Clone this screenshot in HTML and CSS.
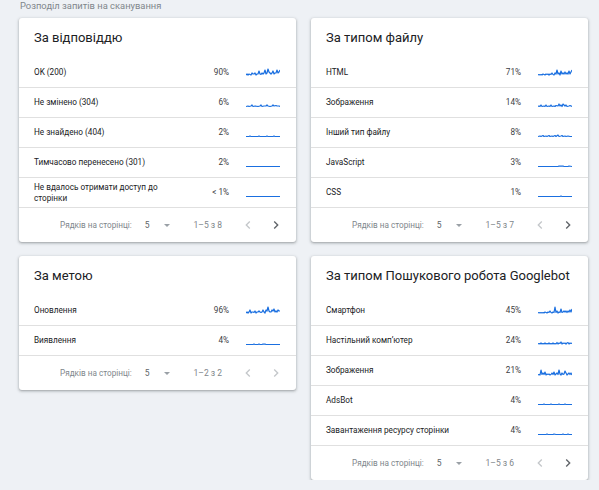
FILE: index.html
```html
<!DOCTYPE html>
<html lang="uk">
<head>
    <meta charset="UTF-8">
    <meta name="viewport" content="width=device-width, initial-scale=1.0">
    <title>Статистика сканування</title>
    <link rel="stylesheet" href="styles.css">
</head>
<body>
    <div class="page">
        <div class="caption">Розподіл запитів на сканування</div>

        <div class="grid">
            <!-- за відповіддю -->
            <section class="card">
                <h2 class="card-title">За відповіддю</h2>
                <div class="row">
                    <span class="label">OK (200)</span>
                    <span class="pct">90%</span>
                    <svg class="spark" viewBox="0 0 34 12"><polyline points="0,8 1,7 2,8 3,7 4,7.5 5,8 6,6 7,7 8,7 9,6 10,8 11,7 12,7 13,4 14,7 15,7.5 16,6 17,7 18,6 19,3 20,7 21,6 22,2 23,5 24,6 25,7 26,6 27,4 28,7 29,6 30,6 31,3 32,6 33,5 34,3"/></svg>
                </div>
                <div class="row">
                    <span class="label">Не змінено (304)</span>
                    <span class="pct">6%</span>
                    <svg class="spark" viewBox="0 0 34 12"><polyline points="0,9.5 2,9 3,9.5 5,9 6,8 7,9.5 9,9 10,9.2 12,9.5 14,9 15,8 16,9.5 18,9 20,9 21,8 22,9 24,9.5 26,9 27,8 28,9 30,8.5 31,9 33,9 34,9.5"/></svg>
                </div>
                <div class="row">
                    <span class="label">Не знайдено (404)</span>
                    <span class="pct">2%</span>
                    <svg class="spark" viewBox="0 0 34 12"><polyline points="0,9.5 3,9.5 4,9 5,9.5 12,9.5 13,9 14,9.5 20,9.5 21,9 22,9.5 27,9.5 28,9 29,9.5 34,9.5"/></svg>
                </div>
                <div class="row">
                    <span class="label">Тимчасово перенесено (301)</span>
                    <span class="pct">2%</span>
                    <svg class="spark" viewBox="0 0 34 12"><polyline points="0,9.5 34,9.5"/></svg>
                </div>
                <div class="row">
                    <span class="label">Не вдалось отримати доступ до сторінки</span>
                    <span class="pct">&lt; 1%</span>
                    <svg class="spark" viewBox="0 0 34 12"><polyline points="0,9.5 34,9.5"/></svg>
                </div>
                <div class="pager">
                    <span class="pager-label">Рядків на сторінці:</span>
                    <span class="pager-size">5</span>
                    <span class="pager-caret"></span>
                    <span class="pager-range">1–5 з 8</span>
                    <svg class="chev off" viewBox="0 0 24 24"><path d="M15.41 7.41L14 6l-6 6 6 6 1.41-1.41L10.83 12z"/></svg>
                    <svg class="chev" viewBox="0 0 24 24"><path d="M10 6L8.59 7.41 13.17 12l-4.58 4.59L10 18l6-6z"/></svg>
                </div>
            </section>

            <!-- за типом файлу -->
            <section class="card">
                <h2 class="card-title">За типом файлу</h2>
                <div class="row">
                    <span class="label">HTML</span>
                    <span class="pct">71%</span>
                    <svg class="spark" viewBox="0 0 34 12"><polyline points="0,8 1,7.5 2,8 3,7.5 4,8 5,7 6,7.5 7,8 8,7 9,7.5 10,7 11,8 12,7 13,7.5 14,6 15,7.5 16,8 17,6 18,7 19,3 20,7 21,6 22,8 23,4 24,7 25,6 26,7 27,5 28,7 29,6 30,7 31,4 32,7 33,5 34,3"/></svg>
                </div>
                <div class="row">
                    <span class="label">Зображення</span>
                    <span class="pct">14%</span>
                    <svg class="spark" viewBox="0 0 34 12"><polyline points="0,9.5 1,9 2,9.5 3,8 4,9.5 6,9 7,9.5 8,8 9,9.5 11,9 12,9.5 13,8 14,9.5 16,9 17,9.5 18,8.5 20,9 21,7 22,9 23,8 24,9.5 25,7 26,8 27,9 28,8 29,9.5 31,9 32,8.5 34,9.5"/></svg>
                </div>
                <div class="row">
                    <span class="label">Інший тип файлу</span>
                    <span class="pct">8%</span>
                    <svg class="spark" viewBox="0 0 34 12"><polyline points="0,9.5 2,9 3,9.5 5,8.5 6,9.5 8,9 9,9.5 11,8.5 12,9.5 14,9 15,9.5 17,8.5 18,9.5 20,8 21,9.5 23,9 24,8.5 25,9.5 27,9 28,9.5 30,9 32,9.5 34,9.5"/></svg>
                </div>
                <div class="row">
                    <span class="label">JavaScript</span>
                    <span class="pct">3%</span>
                    <svg class="spark" viewBox="0 0 34 12"><polyline points="0,9.5 20,9.5 21,9 23,9.2 25,9 26,9.5 30,9.5 31,9 34,9.5"/></svg>
                </div>
                <div class="row">
                    <span class="label">CSS</span>
                    <span class="pct">1%</span>
                    <svg class="spark" viewBox="0 0 34 12"><polyline points="0,9.5 22,9.5 23,9 24,9.5 34,9.5"/></svg>
                </div>
                <div class="pager">
                    <span class="pager-label">Рядків на сторінці:</span>
                    <span class="pager-size">5</span>
                    <span class="pager-caret"></span>
                    <span class="pager-range">1–5 з 7</span>
                    <svg class="chev off" viewBox="0 0 24 24"><path d="M15.41 7.41L14 6l-6 6 6 6 1.41-1.41L10.83 12z"/></svg>
                    <svg class="chev" viewBox="0 0 24 24"><path d="M10 6L8.59 7.41 13.17 12l-4.58 4.59L10 18l6-6z"/></svg>
                </div>
            </section>

            <!-- за метою -->
            <section class="card">
                <h2 class="card-title">За метою</h2>
                <div class="row">
                    <span class="label">Оновлення</span>
                    <span class="pct">96%</span>
                    <svg class="spark" viewBox="0 0 34 12"><polyline points="0,8 1,7 2,8 3,7 4,5 5,8 6,7 7,7 8,7.5 9,6 10,8 11,7 12,7 13,6 14,7 15,7.5 16,7 17,5 18,7 19,8 20,5 21,6 22,2 23,6 24,7 25,7 26,5 27,6 28,4 29,7 30,6 31,7 32,5 33,6 34,6"/></svg>
                </div>
                <div class="row">
                    <span class="label">Виявлення</span>
                    <span class="pct">4%</span>
                    <svg class="spark" viewBox="0 0 34 12"><polyline points="0,9.5 7,9.5 8,9 9,9.5 12,9.5 13,9 14,9.5 16,9.5 17,9 18,9.2 19,9 20,9.5 34,9.5"/></svg>
                </div>
                <div class="pager">
                    <span class="pager-label">Рядків на сторінці:</span>
                    <span class="pager-size">5</span>
                    <span class="pager-caret"></span>
                    <span class="pager-range">1–2 з 2</span>
                    <svg class="chev off" viewBox="0 0 24 24"><path d="M15.41 7.41L14 6l-6 6 6 6 1.41-1.41L10.83 12z"/></svg>
                    <svg class="chev off" viewBox="0 0 24 24"><path d="M10 6L8.59 7.41 13.17 12l-4.58 4.59L10 18l6-6z"/></svg>
                </div>
            </section>

            <!-- за типом Googlebot -->
            <section class="card">
                <h2 class="card-title">За типом Пошукового робота Googlebot</h2>
                <div class="row">
                    <span class="label">Смартфон</span>
                    <span class="pct">45%</span>
                    <svg class="spark" viewBox="0 0 34 12"><polyline points="0,8 1,7.5 2,8 3,7.5 4,8 5,7.5 6,8 7,7 8,7.5 9,8 10,7 11,7.5 12,6 13,7.5 14,8 15,7 16,7.5 17,2 18,7.5 19,6 20,8 21,7 22,7.5 23,4 24,7.5 25,7 26,6 27,7 28,6 29,7.5 30,6 31,7 32,5 33,7 34,4"/></svg>
                </div>
                <div class="row">
                    <span class="label">Настільний комп’ютер</span>
                    <span class="pct">24%</span>
                    <svg class="spark" viewBox="0 0 34 12"><polyline points="0,9 1,8.5 2,9 3,8 4,9 5,8.5 6,9 7,8 8,9 9,8.5 10,9 11,8 12,9 13,8.5 14,9 15,8 16,9 17,8.5 18,9 19,7.5 20,9 21,8 22,8.5 23,7 24,9 25,8 26,8.5 27,8 28,9 29,8 30,7.5 31,9 32,8 33,8.5 34,8"/></svg>
                </div>
                <div class="row">
                    <span class="label">Зображення</span>
                    <span class="pct">21%</span>
                    <svg class="spark" viewBox="0 0 34 12"><polyline points="0,10 1,9.5 2,10 3,5 4,9.5 5,8 6,9.5 7,7 8,10 9,9 10,9.5 11,9 12,10 13,9.5 14,8 15,9.5 16,7 17,10 18,9 19,8 20,9.5 21,5 22,9 23,10 24,8 25,9.5 26,9 27,6 28,8 29,10 30,9 31,8 32,9.5 33,8 34,10"/></svg>
                </div>
                <div class="row">
                    <span class="label">AdsBot</span>
                    <span class="pct">4%</span>
                    <svg class="spark" viewBox="0 0 34 12"><polyline points="0,9.5 5,9.5 6,9 7,9.5 12,9.5 13,9 14,9.5 20,9.5 21,9 22,9.5 26,9.5 27,9 28,9.5 34,9.5"/></svg>
                </div>
                <div class="row">
                    <span class="label">Завантаження ресурсу сторінки</span>
                    <span class="pct">4%</span>
                    <svg class="spark" viewBox="0 0 34 12"><polyline points="0,9.5 8,9.5 9,9 10,9.5 15,9.5 16,9 18,9.5 24,9.5 25,9 26,9.5 29,9.5 30,9 31,9.5 34,9.5"/></svg>
                </div>
                <div class="pager">
                    <span class="pager-label">Рядків на сторінці:</span>
                    <span class="pager-size">5</span>
                    <span class="pager-caret"></span>
                    <span class="pager-range">1–5 з 6</span>
                    <svg class="chev off" viewBox="0 0 24 24"><path d="M15.41 7.41L14 6l-6 6 6 6 1.41-1.41L10.83 12z"/></svg>
                    <svg class="chev" viewBox="0 0 24 24"><path d="M10 6L8.59 7.41 13.17 12l-4.58 4.59L10 18l6-6z"/></svg>
                </div>
            </section>
        </div>
    </div>
</body>
</html>
```

FILE: styles.css
```css
body {
    margin: 0;
    background-color: #eef1f5;
    font-family: Roboto, "Liberation Sans", Arial, sans-serif;
    color: #202124;
}

.page {
    padding: 0 11px 0 19px;
}

.caption {
    padding-left: 1px;
    font-size: 9.4px;
    line-height: 11px;
    color: #80868b;
    margin-bottom: 7px;
}

.grid {
    display: grid;
    grid-template-columns: 277px 277px;
    column-gap: 15px;
    row-gap: 14px;
    align-items: start;
}

.card {
    background-color: #fff;
    border-radius: 3px;
    box-shadow: 0 1px 2px 0 rgba(60,64,67,0.3), 0 1px 3px 1px rgba(60,64,67,0.15);
}

.card-title {
    margin: 0;
    padding: 10px 15px;
    font-size: 13px;
    line-height: 20px;
    font-weight: 400;
    color: #202124;
}

.row {
    display: grid;
    grid-template-columns: 127px 1fr 34px;
    column-gap: 17px;
    align-items: center;
    height: 29px;
    padding: 0 16px 0 15px;
    border-bottom: 1px solid #e0e0e0;
    font-size: 8.2px;
    line-height: 11px;
}

.label {
    color: #202124;
}

.pct {
    text-align: right;
    color: #3c4043;
}

.spark {
    display: block;
    width: 34px;
    height: 12px;
}

.spark polyline {
    fill: none;
    stroke: #1a6fe0;
    stroke-width: 1.2;
    stroke-linejoin: round;
}

.pager {
    display: flex;
    align-items: center;
    justify-content: flex-end;
    height: 34px;
    padding-right: 12px;
    font-size: 8.5px;
    color: #80868b;
}

.pager-label {
    font-size: 8.2px;
}

.pager-size {
    margin-left: 13px;
    color: #5f6368;
}

.pager-caret {
    width: 0;
    height: 0;
    margin-left: 14px;
    border-left: 3px solid transparent;
    border-right: 3px solid transparent;
    border-top: 3px solid #9aa0a6;
}

.pager-range {
    margin-left: 24px;
    margin-right: 18px;
}

.chev {
    width: 16px;
    height: 16px;
    fill: #5f6368;
}

.chev + .chev {
    margin-left: 12px;
}

.chev.off {
    fill: #c4c7ca;
}
```
